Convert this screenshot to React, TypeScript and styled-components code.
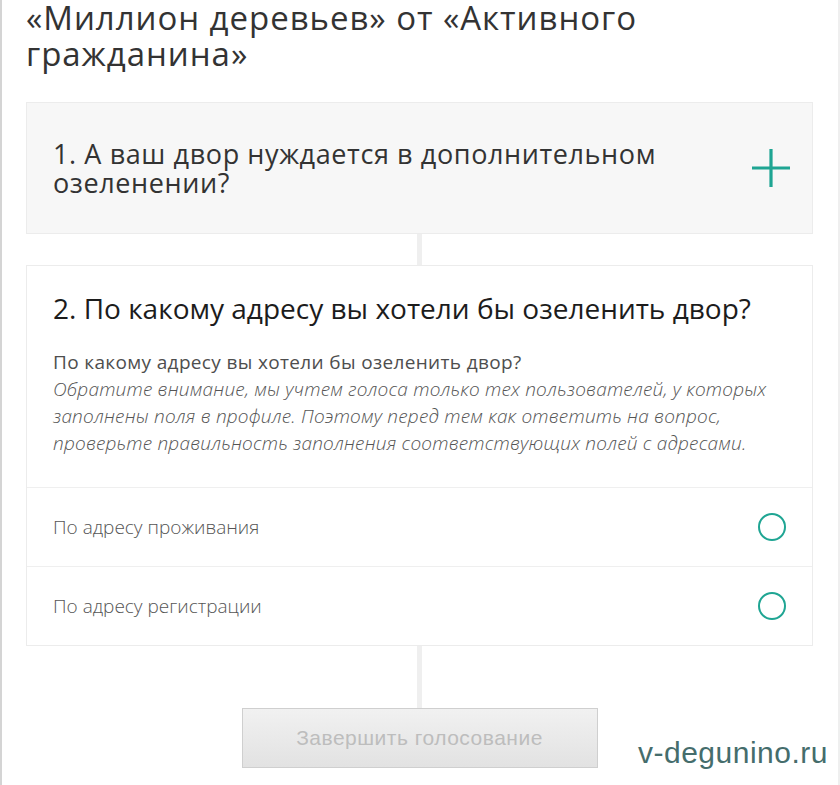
import React from "react";
import styled, { createGlobalStyle } from "styled-components";

const Global = createGlobalStyle`
  html, body { margin: 0; padding: 0; background: #fff; }
  body { font-family: "Open Sans", "Noto Sans", sans-serif; }
  * { box-sizing: border-box; }
`;

const Page = styled.div`
  position: relative;
  width: 840px;
  height: 785px;
  overflow: hidden;
  border-left: 2px solid #d4d4d4;
  border-right: 2px solid #efefef;
  padding: 0 25px 0 24px;
`;

const Title = styled.h1`
  margin: 0 0 30px;
  font-weight: 400;
  font-size: 33px;
  letter-spacing: 0.95px;
  line-height: 36px;
  color: #333;
`;

const Card = styled.div<{ $muted?: boolean }>`
  background: ${(p) => (p.$muted ? "#f7f7f7" : "#fff")};
  border: 1px solid #ececec;
`;

const CollapsedHead = styled.div`
  display: flex;
  align-items: center;
  justify-content: space-between;
  padding: 36px 21px 36px 26px;
`;

const QuestionText = styled.div<{ $dark?: boolean }>`
  font-size: ${(p) => (p.$dark ? "28px" : "27px")};
  letter-spacing: ${(p) => (p.$dark ? "0px" : "0.6px")};
  line-height: ${(p) => (p.$dark ? "32px" : "29px")};
  color: ${(p) => (p.$dark ? "#1c1c1c" : "#333")};
`;

const Connector = styled.div<{ $h: number }>`
  width: 5px;
  height: ${(p) => p.$h}px;
  background: #efefef;
  margin: 0 auto;
`;

const Body = styled.div`
  padding: 26px 26px 30px;
`;

const Sub = styled.div`
  margin-top: 25px;
  font-size: 19px;
  letter-spacing: 0.35px;
  line-height: 27px;
  color: #4e4e4e;
`;

const Note = styled.div`
  font-size: 19px;
  letter-spacing: 0.2px;
  line-height: 27px;
  font-style: italic;
  font-weight: 300;
  color: #555;
`;

const Option = styled.label`
  display: flex;
  align-items: center;
  justify-content: space-between;
  border-top: 1px solid #efefef;
  padding: 0 26px;
  height: 79px;
  font-size: 19px;
  font-weight: 300;
  color: #555;
`;

const Radio = styled.span`
  width: 28px;
  height: 28px;
  border-radius: 50%;
  border: 2px solid #1fa593;
  flex: none;
`;

const Footer = styled.div`
  display: flex;
  flex-direction: column;
  align-items: center;
`;

const Button = styled.button`
  width: 356px;
  height: 60px;
  border: 1px solid #cfcfcf;
  background: linear-gradient(#f1f1f1, #e2e2e2);
  color: #bdbdbd;
  font-family: "Liberation Sans", Arial, sans-serif;
  font-size: 21px;
  letter-spacing: 0.5px;
  cursor: default;
`;

const Watermark = styled.div`
  position: absolute;
  left: 636px;
  top: 735px;
  font-family: "Liberation Sans", Arial, sans-serif;
  font-size: 30px;
  letter-spacing: 0.5px;
  line-height: 36px;
  color: #456d6c;
`;

const Plus = () => (
  <svg width="40" height="40" viewBox="0 0 40 40">
    <path d="M1 20H39M20 1V39" stroke="#1fa593" strokeWidth="3.2" fill="none" />
  </svg>
);

export default function App() {
  return (
    <Page>
      <Global />
      <Title>
        «Миллион деревьев» от «Активного
        <br />
        гражданина»
      </Title>
      <Card $muted>
        <CollapsedHead>
          <QuestionText>
            1. А ваш двор нуждается в дополнительном
            <br />
            озеленении?
          </QuestionText>
          <Plus />
        </CollapsedHead>
      </Card>
      <Connector $h={31} />
      <Card>
        <Body>
          <QuestionText $dark>2. По какому адресу вы хотели бы озеленить двор?</QuestionText>
          <Sub>По какому адресу вы хотели бы озеленить двор?</Sub>
          <Note>
            Обратите внимание, мы учтем голоса только тех пользователей, у которых
            <br />
            заполнены поля в профиле. Поэтому перед тем как ответить на вопрос,
            <br />
            проверьте правильность заполнения соответствующих полей с адресами.
          </Note>
        </Body>
        <Option>
          По адресу проживания
          <Radio />
        </Option>
        <Option>
          По адресу регистрации
          <Radio />
        </Option>
      </Card>
      <Footer>
        <Connector $h={62} />
        <Button disabled>Завершить голосование</Button>
      </Footer>
      <Watermark>v-degunino.ru</Watermark>
    </Page>
  );
}
